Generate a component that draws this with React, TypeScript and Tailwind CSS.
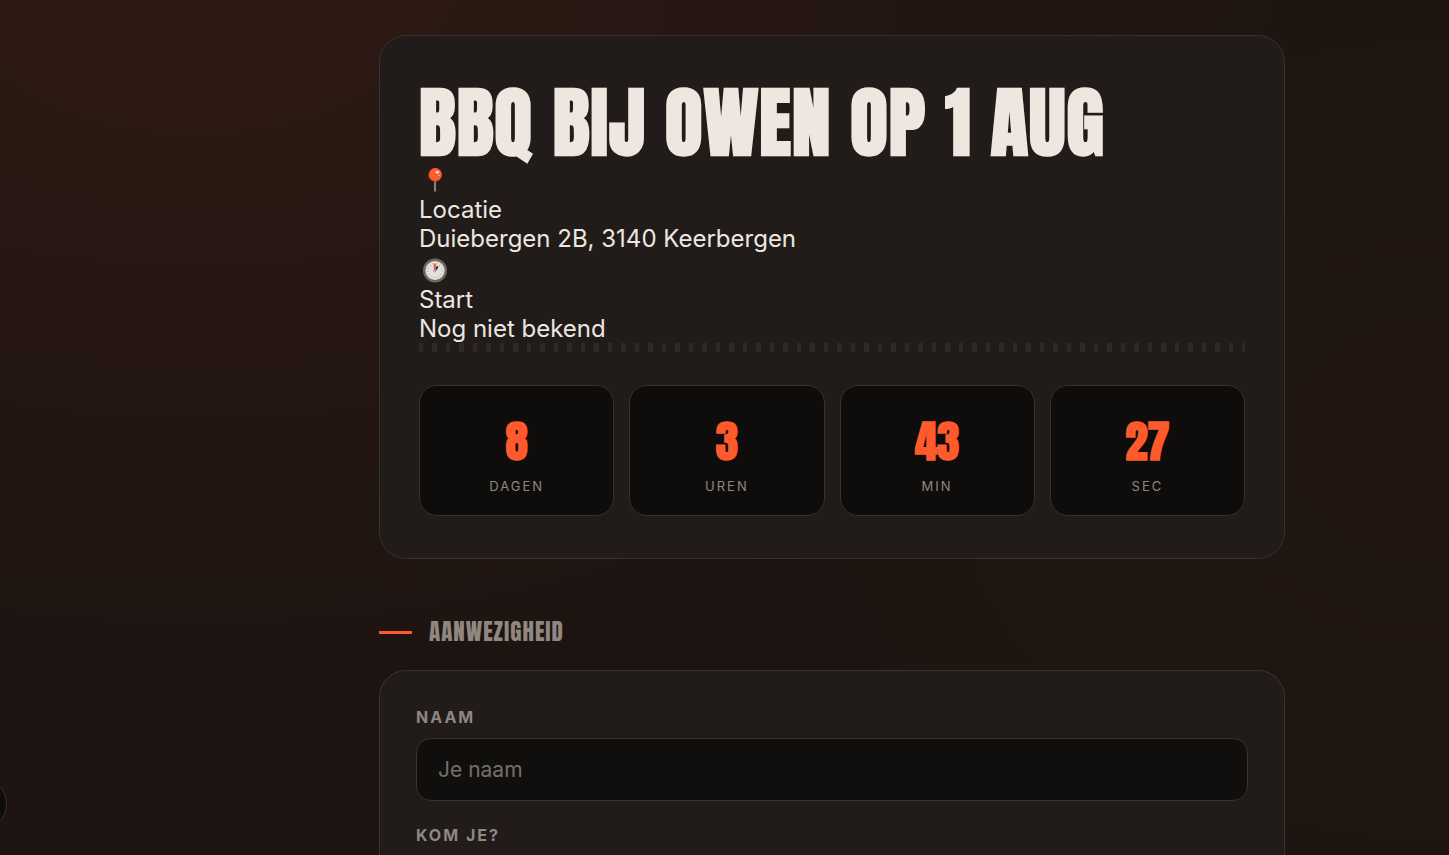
import React, { useState } from 'react';

const PinIcon = () => (
  <svg viewBox="0 0 32 32" className="block h-8 w-8" aria-label="Locatie" role="img">
    <path d="M16 17v11" stroke="#a39d98" strokeWidth="1.6" strokeLinecap="round" />
    <circle cx="16" cy="12" r="6.8" fill="#a8371d" />
    <circle cx="16.4" cy="11.5" r="6.4" fill="#ff5a30" />
    <path d="M16.6 7.9h3.2l.4 2.2-1.6 1-2-1.2z" fill="#f3dcd3" />
    <circle cx="20.2" cy="12.5" r=".6" fill="#ffd0c2" />
  </svg>
);

const ClockIcon = () => (
  <svg viewBox="0 0 32 32" className="block h-8 w-8" aria-label="Start" role="img">
    <circle cx="16" cy="17.5" r="10.8" fill="#d9d5ce" stroke="#6d6a63" strokeWidth="2.4" />
    <circle cx="16" cy="17.5" r="9" fill="#e6e1d9" />
    <circle cx="16" cy="17.5" r="7" fill="none" stroke="#a9adac" strokeWidth="1.2" strokeDasharray="1 2.4" />
    <path d="M15.8 18l3-4.6" stroke="#26345c" strokeWidth="2" />
    <path d="M15.8 17.6v-7" stroke="#f4542d" strokeWidth="2" />
    <circle cx="15.6" cy="18" r="1.4" fill="#a9b2b8" />
  </svg>
);

const BbqInvite = () => {
  const [name, setName] = useState('');

  const countdown = [
    { value: '8', label: 'Dagen' },
    { value: '3', label: 'Uren' },
    { value: '43', label: 'Min' },
    { value: '27', label: 'Sec' },
  ];

  return (
    <div className="relative flex min-h-screen flex-col overflow-hidden bg-[#1d1411] bg-[radial-gradient(ellipse_1100px_720px_at_200px_-40px,rgba(255,87,40,0.08),transparent),radial-gradient(ellipse_750px_600px_at_100%_440px,rgba(255,140,40,0.02),transparent)] pt-[35px] pr-4 pl-[231px] font-[Inter,sans-serif] text-[#ede7e0]">
      <main className="mx-auto flex w-full max-w-[906px] flex-1 flex-col">
        {/* Invitation */}
        <section className="rounded-[27px] border border-[#38312d] bg-[#211c19] px-[39px] pt-[39px] pb-[42px]">
          <h1 className="h-[88px] font-[Anton,sans-serif] text-[77px] leading-[94px] font-bold tracking-[1px] whitespace-nowrap uppercase">
            BBQ bij Owen op 1 aug
          </h1>

          <div className="text-2xl leading-[29px]">
            <PinIcon />
            <p>Locatie</p>
            <p>Duiebergen 2B, 3140 Keerbergen</p>
            <ClockIcon />
            <p>Start</p>
            <p>Nog niet bekend</p>
          </div>

          <div className="h-[9px] bg-[repeating-linear-gradient(90deg,#2f2926_0_4px,transparent_4px_13px,#2f2926_13px_18px,transparent_18px_27px)]" />

          {/* Countdown */}
          <div className="mt-[33px] grid grid-cols-4 gap-[15px]">
            {countdown.map((item) => (
              <div
                key={item.label}
                className="flex h-[131px] flex-col items-center rounded-[18px] border border-[#38312d] bg-[#0f0d0b] pt-7"
              >
                <span className="font-[Anton,sans-serif] text-[45px] leading-[54px] font-bold text-[#ff5a2c]">
                  {item.value}
                </span>
                <span className="mt-2 text-[13px] leading-5 tracking-[2px] text-[#8f8780] uppercase">
                  {item.label}
                </span>
              </div>
            ))}
          </div>
        </section>

        {/* Attendance */}
        <h2 className="mt-[58px] flex items-center gap-[17px] font-[Anton,sans-serif] text-[23px] leading-[30px] font-normal tracking-[1px] text-[#8f8780] uppercase">
          <span className="h-[3px] w-[33px] bg-[#ff5a2c]" />
          Aanwezigheid
        </h2>

        <form className="mt-[23px] flex flex-1 flex-col rounded-t-[27px] border border-b-0 border-[#38312d] bg-[#211c19] px-9 pt-9">
          <label htmlFor="name" className="text-base leading-5 font-bold tracking-[2px] text-[#8f8780] uppercase">
            Naam
          </label>
          <input
            id="name"
            type="text"
            value={name}
            onChange={(e) => setName(e.target.value)}
            placeholder="Je naam"
            className="mt-[11px] h-[63px] w-full rounded-[15px] border border-[#38312d] bg-[#110f0d] px-[21px] text-[21px] outline-none placeholder:text-[#756f6a] focus:border-[#ff5a2c]"
          />
          <p className="mt-6 text-base leading-5 font-bold tracking-[2px] text-[#8f8780] uppercase">Kom je?</p>
        </form>
      </main>

      {/* Floating button, tucked away at the edge */}
      <button
        type="button"
        aria-label="Menu"
        className="absolute bottom-6 -left-12 h-[54px] w-[55px] rounded-full border border-[#38312d] bg-[#0f0d0b]"
      />
    </div>
  );
};

export default BbqInvite;
